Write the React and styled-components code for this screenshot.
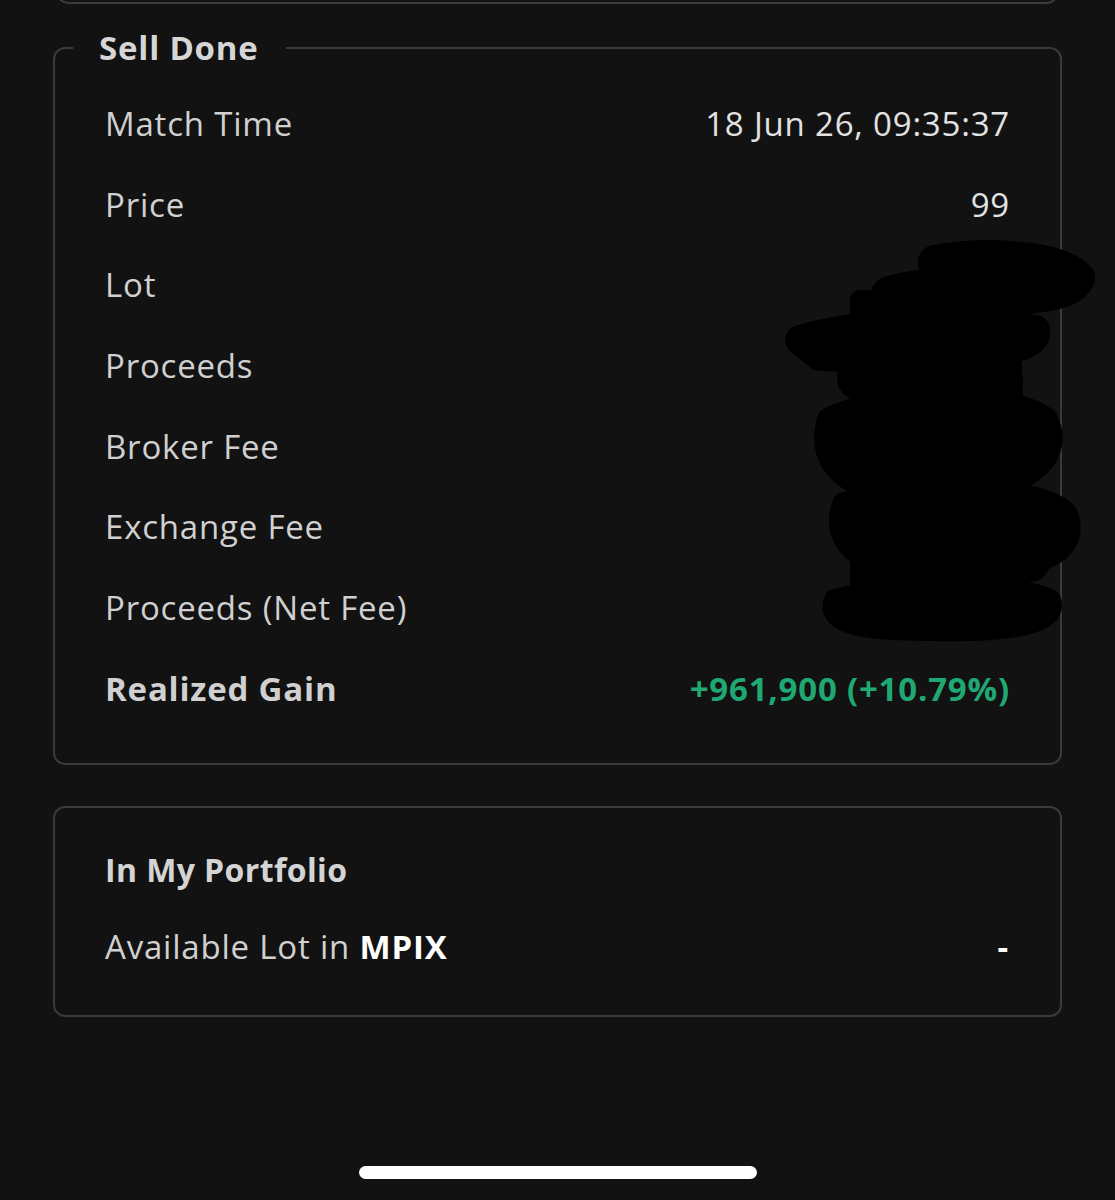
import React from 'react';
import styled, { createGlobalStyle } from 'styled-components';

const GlobalStyle = createGlobalStyle`
  html, body {
    margin: 0;
    padding: 0;
    background: #121212;
  }
  body {
    font-family: "Open Sans", Lato, sans-serif;
    color: #d2d2d2;
  }
`;

const Page = styled.div`
  position: relative;
  width: 1115px;
  height: 1200px;
  overflow: hidden;
  background: #121212;
`;

const Column = styled.div`
  display: flex;
  flex-direction: column;
  padding: 0 53px 0 53px;
`;

const PrevCardEdge = styled.div`
  margin: -40px 2px 0;
  height: 42px;
  border: 2px solid #3a3a3a;
  border-top: none;
  border-radius: 0 0 14px 14px;
`;

const Fieldset = styled.fieldset`
  margin: 24px 0 0;
  padding: 15px 50px 34px 50px;
  border: 2px solid #3a3a3a;
  border-radius: 12px;
  min-width: 0;
`;

const Legend = styled.legend`
  margin-left: -32px;
  padding: 0 27px 0 26px;
  font-size: 33px;
  line-height: 40px;
  letter-spacing: 0.8px;
  font-weight: 700;
  color: #d6d6d6;
`;

const Row = styled.div`
  display: flex;
  align-items: center;
  justify-content: space-between;
  height: 80.7px;
  font-size: 33px;
  letter-spacing: 0.8px;
  font-weight: ${({ $bold }) => ($bold ? 700 : 400)};
`;

const Label = styled.span`
  color: #d0d0d0;
`;

const Value = styled.span`
  color: ${({ $tone }) => ($tone === 'up' ? '#20a872' : '#e2e2e2')};
`;

const Card = styled.section`
  margin-top: 41px;
  padding: 25px 50px 28px 50px;
  border: 2px solid #3a3a3a;
  border-radius: 12px;
  display: flex;
  flex-direction: column;
`;

const CardTitle = styled.h3`
  margin: 0;
  height: 74px;
  display: flex;
  align-items: center;
  font-size: 32px;
  letter-spacing: 0.4px;
  font-weight: 700;
  color: #d4d4d4;
`;

const Strong = styled.b`
  color: #ffffff;
  font-weight: 700;
`;

const Dash = styled.span`
  color: #ffffff;
  font-weight: 700;
  padding-right: 1px;
`;

const HomeBar = styled.div`
  position: absolute;
  left: 359px;
  top: 1166px;
  width: 398px;
  height: 13px;
  border-radius: 7px;
  background: #ffffff;
`;

const Scribble = styled.svg`
  position: absolute;
  left: 0;
  top: 0;
  pointer-events: none;
`;

const rows = [
  ['Match Time', '18 Jun 26, 09:35:37'],
  ['Price', '99'],
  ['Lot', ''],
  ['Proceeds', ''],
  ['Broker Fee', ''],
  ['Exchange Fee', ''],
  ['Proceeds (Net Fee)', ''],
];

const App = () => (
  <Page>
    <GlobalStyle />
    <Column>
      <PrevCardEdge />
      <Fieldset>
        <Legend>Sell Done</Legend>
        {rows.map(([label, value]) => (
          <Row key={label}>
            <Label>{label}</Label>
            <Value>{value}</Value>
          </Row>
        ))}
        <Row $bold>
          <Label>Realized Gain</Label>
          <Value $tone="up">+961,900 (+10.79%)</Value>
        </Row>
      </Fieldset>
      <Card>
        <CardTitle>In My Portfolio</CardTitle>
        <Row>
          <Label>Available Lot in <Strong>MPIX</Strong></Label>
          <Dash>-</Dash>
        </Row>
      </Card>
    </Column>
    {/* hand-drawn redaction over the hidden values */}
    <Scribble width="1115" height="1200" viewBox="0 0 1115 1200">
      <g fill="#000" stroke="#000" strokeLinecap="round" strokeLinejoin="round">
        <path d="M935 262 C 990 252, 1060 258, 1078 278 C 1070 300, 1000 300, 940 296 Z" strokeWidth="34" />
        <path d="M890 296 C 930 284, 990 286, 1020 296" fill="none" strokeWidth="40" />
        <path d="M800 340 C 860 322, 960 318, 1035 330 C 1040 350, 980 362, 820 356 Z" strokeWidth="30" />
        <path d="M860 378 C 900 372, 980 372, 1000 380" fill="none" strokeWidth="46" />
        <path d="M860 300 L 1010 300 L 1020 620 L 860 620 Z" strokeWidth="20" />
        <path d="M830 420 C 880 395, 1010 392, 1045 420 C 1065 460, 1020 492, 930 495 C 860 495, 815 470, 830 420 Z" strokeWidth="26" />
        <path d="M845 505 C 900 488, 1040 485, 1065 515 C 1080 555, 1030 570, 940 572 C 870 572, 830 545, 845 505 Z" strokeWidth="26" />
        <path d="M880 560 C 930 552, 1000 552, 1030 562" fill="none" strokeWidth="40" />
        <path d="M835 600 C 890 584, 1010 582, 1050 600 C 1060 625, 1000 632, 930 630 C 870 630, 825 625, 835 600 Z" strokeWidth="22" />
      </g>
    </Scribble>
    <HomeBar />
  </Page>
);

export default App;
